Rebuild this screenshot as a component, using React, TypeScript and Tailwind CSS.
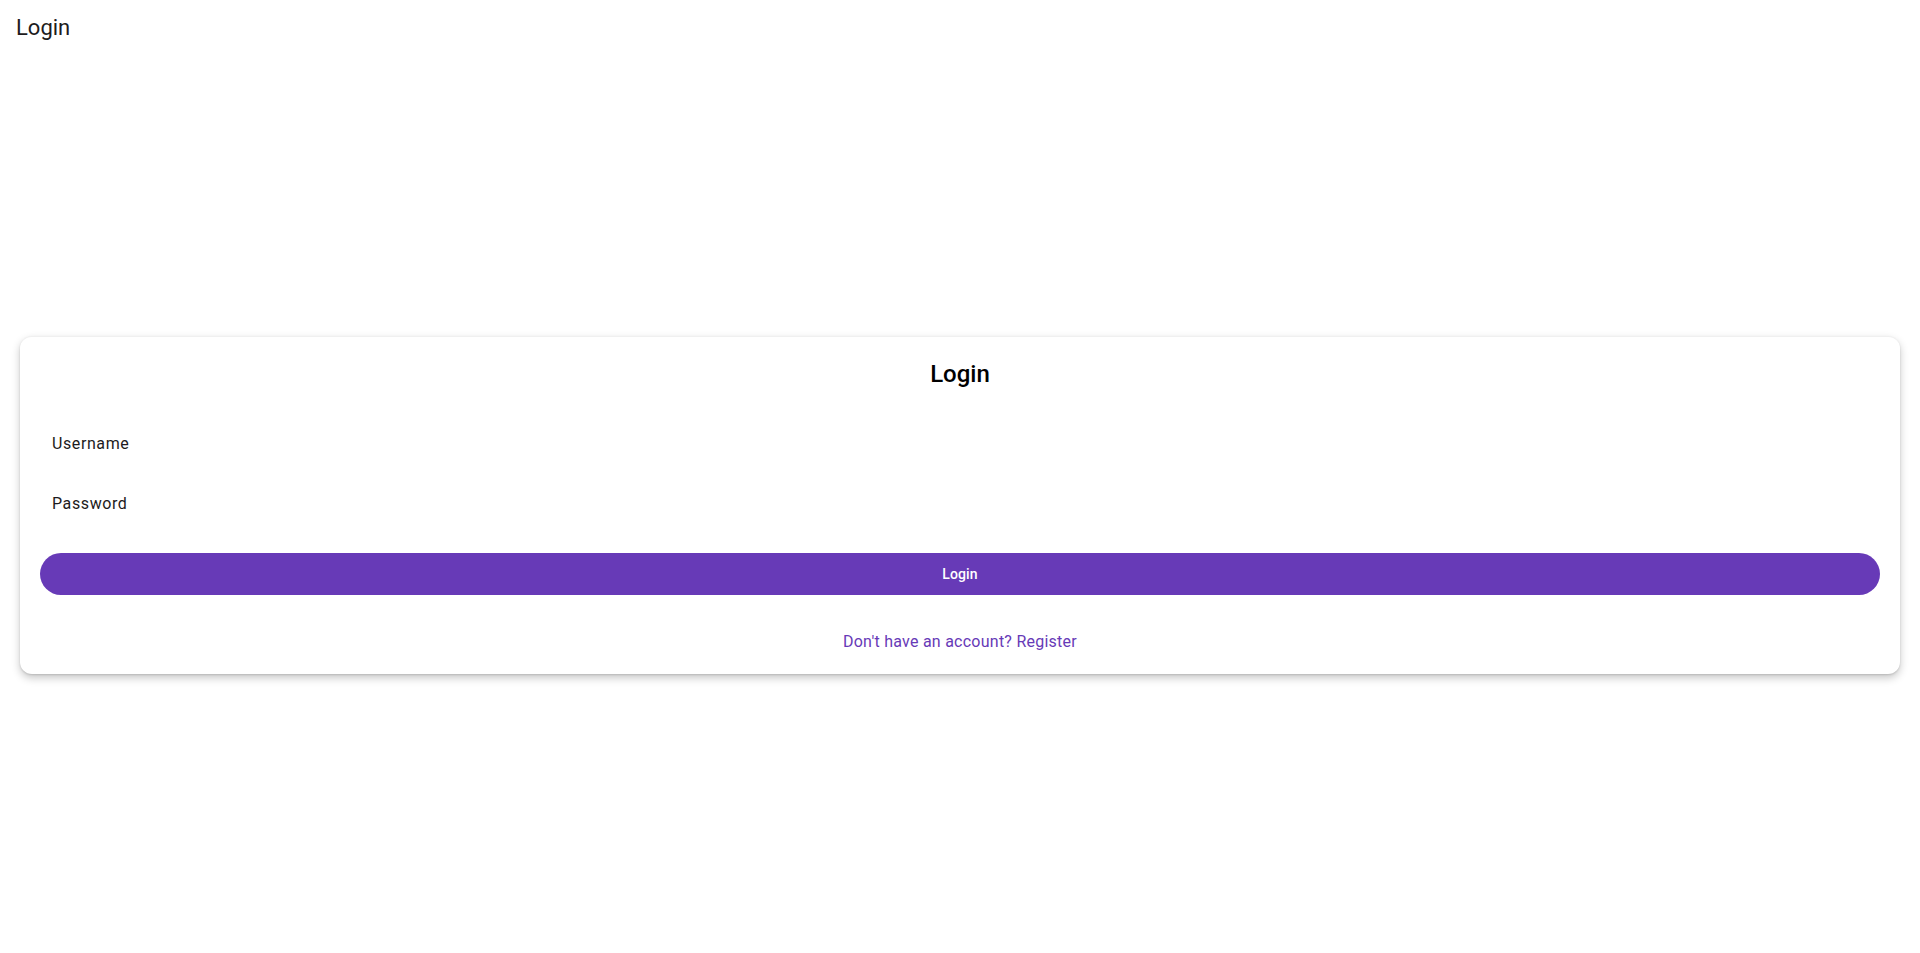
export default function App() {
  return (
    <div className="h-screen flex flex-col bg-white font-['Roboto',sans-serif]">
      {/* App bar */}
      <header className="h-14 px-4 flex items-center shrink-0">
        <h1 className="text-[22px] leading-7 text-[#1d1b20]">Login</h1>
      </header>

      {/* Centered card */}
      <main className="flex-1 flex items-center px-5">
        <div className="w-full rounded-xl bg-white shadow-[0_1px_2px_rgba(0,0,0,0.12),0_4px_8px_rgba(0,0,0,0.22)] border-t border-[#f0f0f0] px-5 pt-[21px] pb-[20px]">
          <h2 className="text-center text-2xl leading-8 font-medium text-black">Login</h2>

          <div className="mt-[42px] px-3 space-y-9">
            <input
              placeholder="Username"
              className="block w-full text-base leading-6 tracking-[0.6px] text-[#1d1b20] placeholder:text-[#1d1b20] outline-none bg-transparent"
            />
            <input
              type="password"
              placeholder="Password"
              className="block w-full text-base leading-6 tracking-[0.6px] text-[#1d1b20] placeholder:text-[#1d1b20] outline-none bg-transparent"
            />
          </div>

          <button className="mt-[37px] w-full h-[42px] rounded-full bg-[#673ab7] text-white text-sm font-medium tracking-[0.1px]">
            Login
          </button>

          <div className="mt-[35px] text-center">
            <button className="text-base leading-6 tracking-[0.25px] text-[#673ab7]">Don't have an account? Register</button>
          </div>
        </div>
      </main>
    </div>
  );
}
